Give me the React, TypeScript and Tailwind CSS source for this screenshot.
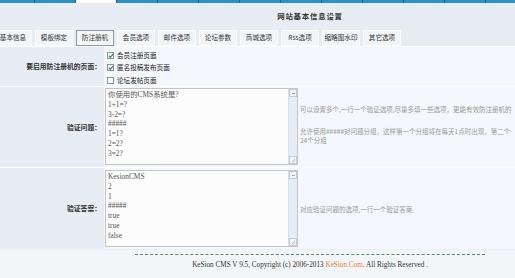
import React from "react";

const tabs = ["基本信息", "模板绑定", "防注册机", "会员选项", "邮件选项", "论坛参数", "商城选项", "Rss选项", "缩略图水印", "其它选项"];

const questions = ["你使用的CMS系统是?", "1+1=?", "3-2=?", "#####", "1=1?", "2=2?", "3=2?"];
const answers = ["KesionCMS", "2", "1", "#####", "true", "true", "false"];

function CheckBox({ checked, label }: { checked: boolean; label: string }) {
  return (
    <div className="flex items-center h-[12.5px]">
      <span className="relative w-[7px] h-[7px] border border-[#8194ab] bg-white mr-[3px]">
        {checked && (
          <svg viewBox="0 0 7 7" className="absolute left-0 top-0 w-[6px] h-[6px]">
            <path d="M1 3.2 L2.7 5 L6 1.2" stroke="#1f9a2a" strokeWidth="1.4" fill="none" />
          </svg>
        )}
      </span>
      <span className="text-[6.6px] text-[#222] leading-none">{label}</span>
    </div>
  );
}

function FakeTextarea({ lines }: { lines: string[] }) {
  return (
    <div className="flex w-[193px] h-[77px] border border-[#c5c5c5] bg-[#fcfcfc]">
      <div className="flex-1 pl-[2px] pt-[1px] font-['Liberation_Serif','Noto_Sans_CJK_SC',serif] text-[7.4px] leading-[9.8px] text-[#555]">
        {lines.map((l, i) => (
          <div key={i} className="whitespace-pre">{l}</div>
        ))}
      </div>
      <div className="w-[9px] flex flex-col justify-between bg-[#e4ecf8] border-l border-[#d5dde8]">
        <div className="h-[8px] border border-[#c3cbd6] bg-[#f1f4f8] flex items-center justify-center">
          <span className="w-[3px] h-px bg-[#9aa6b4]" />
        </div>
        <div className="h-[8px] border border-[#c3cbd6] bg-[#f1f4f8] flex items-end justify-end">
          <svg viewBox="0 0 6 6" className="w-[5px] h-[5px]">
            <path d="M1 5 L5 1 M3 5 L5 3" stroke="#a0a8b3" strokeWidth="0.8" />
          </svg>
        </div>
      </div>
    </div>
  );
}

export default function App() {
  return (
    <div className="w-[515px] h-[278px] overflow-hidden bg-[#f3f6f9] font-['Noto_Sans_CJK_SC',sans-serif]">
      <div className="w-[620px]">
        {/* top strip */}
        <div className="h-[3px] flex ml-[-6px] bg-[#17638f]">
          {tabs.concat(["", "", ""]).map((_, i) => (
            <div
              key={i}
              className={`w-[40px] mr-px h-full ${i === 2 ? "bg-white" : "bg-[#2b92c9]"}`}
            />
          ))}
        </div>

        <div className="h-[25px] bg-[#e7edf3] flex items-center justify-center">
          <span className="text-[7.4px] font-bold tracking-[0.8px] text-[#333]">网站基本信息设置</span>
        </div>

        <div className="h-[19px] bg-[#e7edf3] pt-[2px] border-b border-[#fbfcfd]">
          <div className="flex ml-[-6px]">
            {tabs.map((t, i) => (
              <div
                key={t}
                className={`w-[38px] mr-[3px] h-[16px] flex items-center justify-center text-[6.6px] text-[#333] whitespace-nowrap ${
                  i === 2
                    ? "bg-[#f4f6f8] border border-[#8d99a6]"
                    : "bg-[#f2f5f8] border border-[#fafbfc]"
                }`}
              >
                {t}
              </div>
            ))}
          </div>
        </div>

        {/* row 1 */}
        <div className="flex h-[40px] border-b border-white">
          <div className="w-[104px] bg-[#e6edf5] flex items-center justify-end pr-[3px] text-[6.8px] font-bold text-[#333] whitespace-nowrap">
            要启用防注册机的页面：
          </div>
          <div className="flex-1 bg-[#f4f7fb] pl-[3px] pt-[2px]">
            <CheckBox checked label="会员注册页面" />
            <CheckBox checked label="匿名投稿发布页面" />
            <CheckBox checked={false} label="论坛发帖页面" />
          </div>
        </div>

        {/* row 2 */}
        <div className="flex h-[81px] border-b border-white">
          <div className="w-[104px] bg-[#e6edf5] flex items-center justify-end pr-[3px] text-[6.8px] font-bold text-[#333]">
            验证问题：
          </div>
          <div className="flex-1 bg-[#f4f7fb] pl-px pt-px flex">
            <FakeTextarea lines={questions} />
            <div className="ml-[2px] pt-[17px] text-[6.5px] leading-[9px] text-[#9a9a9a] whitespace-nowrap">
              <div>可以设置多个,一行一个验证选项,尽量多填一些选项，更能有效防注册机的</div>
              <div className="mt-[13px]">允许使用#####对问题分组，这样第一个分组将在每天1点时出现，第二个</div>
              <div>24个分组</div>
            </div>
          </div>
        </div>

        {/* row 3 */}
        <div className="flex h-[82px] border-b border-[#e9eef3]">
          <div className="w-[104px] bg-[#e6edf5] flex items-center justify-end pr-[3px] text-[6.8px] font-bold text-[#333]">
            验证答案：
          </div>
          <div className="flex-1 bg-[#f4f7fb] pl-px pt-[2px] flex">
            <FakeTextarea lines={answers} />
            <div className="ml-[2px] self-center text-[6.5px] text-[#9a9a9a] whitespace-nowrap">
              对应验证问题的选项,一行一个验证答案
            </div>
          </div>
        </div>

        {/* footer */}
        <div className="pt-[4px] flex flex-col items-center">
          <div className="w-[350px] border-t border-dashed border-[#5f8a68]" />
          <div className="mt-[5px] font-['Liberation_Serif','Noto_Sans_CJK_SC',serif] text-[7.2px] text-[#333] whitespace-pre">
            KeSion CMS V 9.5, Copyright (c) 2006-2013 <span className="text-[#f07a1e]">KeSion.Com</span>. All Rights Reserved .
          </div>
        </div>
      </div>
    </div>
  );
}
